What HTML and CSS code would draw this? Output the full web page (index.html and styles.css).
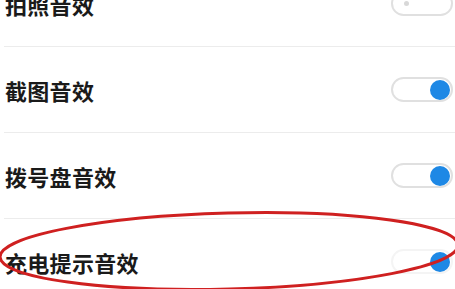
FILE: index.html
```html
<!DOCTYPE html>
<html lang="zh-CN">
<head>
<meta charset="UTF-8">
<meta name="viewport" content="width=device-width, initial-scale=1.0">
<title>声音设置</title>
<link rel="stylesheet" href="styles.css">
</head>
<body>
<div class="screen">
    <ul class="settings">
        <li class="row">
            <span class="label">拍照音效</span>
            <span class="switch"><span class="knob"></span></span>
        </li>
        <li class="row">
            <span class="label">截图音效</span>
            <span class="switch on"><span class="knob"></span></span>
        </li>
        <li class="row">
            <span class="label">拨号盘音效</span>
            <span class="switch on"><span class="knob"></span></span>
        </li>
        <li class="row">
            <span class="label">充电提示音效</span>
            <span class="switch on faded"><span class="knob"></span></span>
        </li>
    </ul>

    <!-- hand drawn mark over the last row -->
    <svg class="mark" width="455" height="289" viewBox="0 0 455 289">
        <ellipse cx="229" cy="251" rx="229" ry="38" transform="rotate(-1.5 229 251)"
                 fill="none" stroke="#cf2020" stroke-width="3"/>
    </svg>
</div>
</body>
</html>
```

FILE: styles.css
```css
html, body {
    margin: 0;
    padding: 0;
    background: #ffffff;
}

.screen {
    position: relative;
    width: 455px;
    height: 289px;
    overflow: hidden;
    font-family: "Noto Sans CJK SC", "Noto Sans", sans-serif;
}

.settings {
    list-style: none;
    margin: -39px 0 0 4px;
    padding: 0;
}

.row {
    display: flex;
    align-items: center;
    justify-content: space-between;
    height: 85px;
    padding: 0 2px 0 1px;
    border-bottom: 1px solid #ececec;
}

.label {
    font-size: 22px;
    font-weight: 700;
    color: #1a1a1a;
    letter-spacing: 0.3px;
}

.switch {
    display: flex;
    align-items: center;
    box-sizing: border-box;
    width: 62px;
    height: 25px;
    padding: 0 6px;
    border: 2px solid #e0e0e0;
    border-radius: 13px;
    background: #ffffff;
}

.knob {
    width: 5px;
    height: 5px;
    border-radius: 50%;
    background: #d8d8d8;
    margin-left: 5px;
}

.switch.on {
    justify-content: flex-end;
    padding: 0 1px;
}

.switch.on .knob {
    width: 20px;
    height: 20px;
    margin: 0;
    background: #1e88e5;
}

.switch.faded {
    border-color: #f4f4f4;
}

.mark {
    position: absolute;
    left: 0;
    top: 0;
}
```
